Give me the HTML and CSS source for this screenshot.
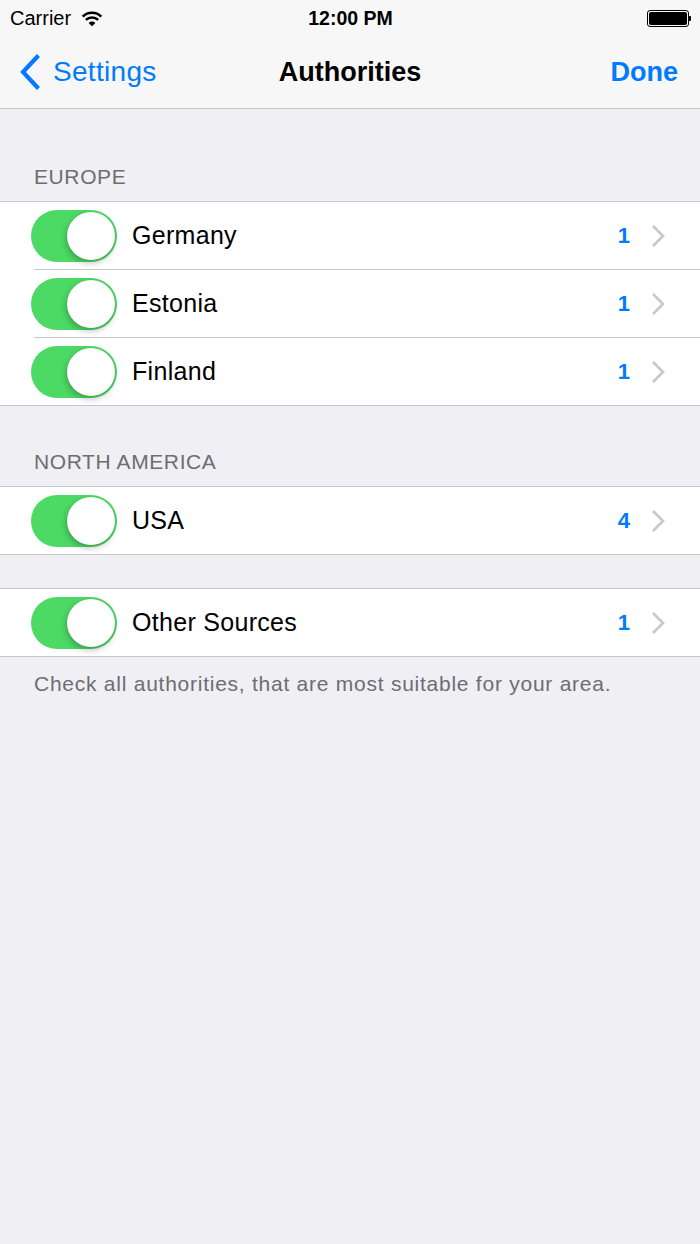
FILE: index.html
```html
<!DOCTYPE html>
<html lang="en">

<head>
    <meta charset="UTF-8">
    <meta name="viewport" content="width=device-width, initial-scale=1.0">
    <title>Authorities</title>
    <link rel="stylesheet" href="styles.css">
</head>

<body>
    <div class="topbar">
        <div class="status">
            <div class="status-left">
                <span>Carrier</span>
                <svg class="wifi" width="22" height="17" viewBox="0 0 21 16">
                    <path d="M10.5 15.5 L7.3 12.2 A4.6 4.6 0 0 1 13.7 12.2 Z" fill="#000"/>
                    <path d="M4.6 9.4 A8.4 8.4 0 0 1 16.4 9.4" fill="none" stroke="#000" stroke-width="2.4"/>
                    <path d="M1.6 6.3 A12.6 12.6 0 0 1 19.4 6.3" fill="none" stroke="#000" stroke-width="2.4"/>
                </svg>
            </div>
            <div class="status-time">12:00 PM</div>
            <div class="status-right">
                <div class="battery"><div class="battery-fill"></div></div>
                <div class="battery-nub"></div>
            </div>
        </div>
        <div class="navbar">
            <div class="nav-back">
                <svg width="24" height="36" viewBox="0 0 24 36">
                    <polyline points="19,3 5,18 19,33" fill="none" stroke="#007aff" stroke-width="4.2" stroke-linecap="square"/>
                </svg>
                <span>Settings</span>
            </div>
            <div class="nav-title">Authorities</div>
            <div class="nav-done">Done</div>
        </div>
    </div>

    <div class="section-header first">EUROPE</div>
    <div class="group">
        <div class="row">
            <div class="toggle on"><div class="knob"></div></div>
            <div class="label">Germany</div>
            <div class="count">1</div>
            <svg class="chevron" width="15" height="24" viewBox="0 0 15 24">
                <polyline points="2,2 12,12 2,22" fill="none" stroke="#c7c7cc" stroke-width="2.6"/>
            </svg>
        </div>
        <div class="row">
            <div class="toggle on"><div class="knob"></div></div>
            <div class="label">Estonia</div>
            <div class="count">1</div>
            <svg class="chevron" width="15" height="24" viewBox="0 0 15 24">
                <polyline points="2,2 12,12 2,22" fill="none" stroke="#c7c7cc" stroke-width="2.6"/>
            </svg>
        </div>
        <div class="row">
            <div class="toggle on"><div class="knob"></div></div>
            <div class="label">Finland</div>
            <div class="count">1</div>
            <svg class="chevron" width="15" height="24" viewBox="0 0 15 24">
                <polyline points="2,2 12,12 2,22" fill="none" stroke="#c7c7cc" stroke-width="2.6"/>
            </svg>
        </div>
    </div>

    <div class="section-header">NORTH AMERICA</div>
    <div class="group">
        <div class="row">
            <div class="toggle on"><div class="knob"></div></div>
            <div class="label">USA</div>
            <div class="count">4</div>
            <svg class="chevron" width="15" height="24" viewBox="0 0 15 24">
                <polyline points="2,2 12,12 2,22" fill="none" stroke="#c7c7cc" stroke-width="2.6"/>
            </svg>
        </div>
    </div>

    <div class="section-gap"></div>
    <div class="group">
        <div class="row">
            <div class="toggle on"><div class="knob"></div></div>
            <div class="label">Other Sources</div>
            <div class="count">1</div>
            <svg class="chevron" width="15" height="24" viewBox="0 0 15 24">
                <polyline points="2,2 12,12 2,22" fill="none" stroke="#c7c7cc" stroke-width="2.6"/>
            </svg>
        </div>
    </div>
    <div class="section-footer">Check all authorities, that are most suitable for your area.</div>
</body>

</html>
```

FILE: styles.css
```css
body {
    margin: 0;
    background: #efeff4;
    font-family: 'Liberation Sans', Arial, sans-serif;
    color: #000;
    min-height: 100vh;
}

.topbar {
    background: #f7f7f8;
    border-bottom: 1px solid #c4c4c6;
}

.status {
    height: 36px;
    display: flex;
    align-items: center;
    justify-content: space-between;
    padding: 0 9px 0 10px;
    font-size: 20px;
}

.status-left {
    display: flex;
    align-items: center;
    gap: 10px;
    width: 160px;
}

.status-time {
    font-size: 19.5px;
    font-weight: bold;
}

.status-right {
    width: 160px;
    display: flex;
    justify-content: flex-end;
    align-items: center;
}

.battery {
    width: 38px;
    height: 13px;
    border: 1px solid #000;
    border-radius: 3px;
    padding: 1px;
}

.battery-fill {
    height: 100%;
    background: #000;
    border-radius: 2px;
}

.battery-nub {
    width: 2px;
    height: 5px;
    background: #000;
    border-radius: 0 1px 1px 0;
}

.navbar {
    height: 72px;
    display: flex;
    align-items: center;
    justify-content: space-between;
    padding: 0 22px 0 18px;
    position: relative;
}

.nav-back {
    display: flex;
    align-items: center;
    gap: 11px;
    color: #007aff;
    font-size: 28px;
    letter-spacing: 0.3px;
}

.nav-title {
    position: absolute;
    left: 0;
    right: 0;
    text-align: center;
    font-size: 27px;
    font-weight: bold;
    pointer-events: none;
}

.nav-done {
    color: #007aff;
    font-size: 27px;
    font-weight: bold;
}

.section-header {
    padding: 44px 34px 12px;
    font-size: 21px;
    line-height: 24px;
    letter-spacing: 0.6px;
    color: #6d6d72;
}

.section-header.first {
    padding-top: 56px;
}

.section-gap {
    height: 33px;
}

.group {
    background: #fff;
    border-top: 1px solid #c8c7cc;
    border-bottom: 1px solid #c8c7cc;
}

.row {
    height: 67px;
    display: flex;
    align-items: center;
    padding: 0 34px 0 31px;
    position: relative;
}

.row + .row {
    border-top: 1px solid #c8c7cc;
}

.row + .row::before {
    content: "";
    position: absolute;
    top: -1px;
    left: 0;
    width: 34px;
    height: 1px;
    background: #fff;
}

.toggle {
    width: 86px;
    height: 52px;
    border-radius: 26px;
    background: #4cd964;
    position: relative;
    flex-shrink: 0;
}

.knob {
    position: absolute;
    top: 2px;
    right: 2px;
    width: 48px;
    height: 48px;
    border-radius: 50%;
    background: #fff;
    box-shadow: -1px 3px 6px rgba(0, 0, 0, 0.25), 0 0 1px rgba(0, 0, 0, 0.15);
}

.label {
    flex: 1;
    margin-left: 15px;
    font-size: 25px;
    letter-spacing: 0.3px;
}

.count {
    color: #007aff;
    font-size: 22px;
    font-weight: bold;
    margin-right: 21px;
}

.chevron {
    display: block;
}

.section-footer {
    padding: 14px 34px;
    font-size: 21px;
    line-height: 26px;
    letter-spacing: 0.75px;
    color: #6d6d72;
}
```
